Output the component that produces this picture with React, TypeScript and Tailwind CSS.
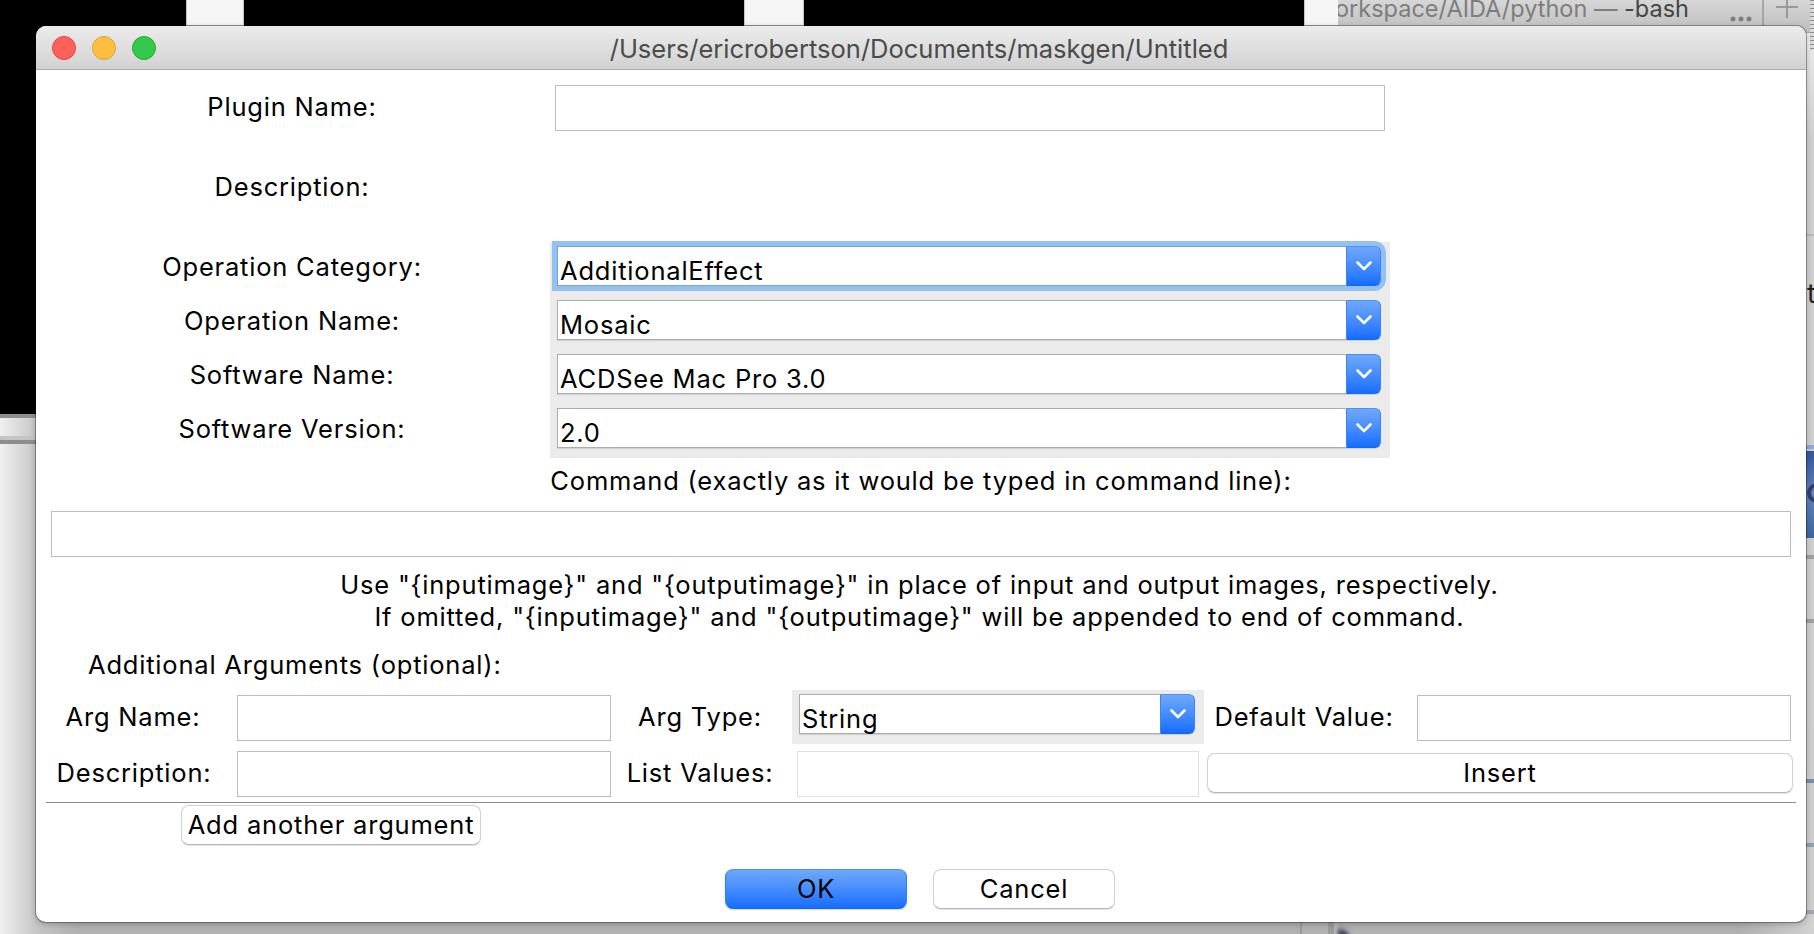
import React from "react";

const TEXT = "text-[25.5px] leading-[32px] whitespace-nowrap text-black tracking-[0.8px]";

function Label({ children, className = "" }: { children: React.ReactNode; className?: string }) {
  return <span className={`${TEXT} text-center ${className}`}>{children}</span>;
}

function Field({ className = "" }: { className?: string }) {
  return <input type="text" className={`box-border block h-[46px] border bg-white outline-none ${className}`} />;
}

function Combo({ value, focused = false, className = "" }: { value: string; focused?: boolean; className?: string }) {
  return (
    <div
      className={`flex h-10 rounded-r-[7px] ${focused ? "shadow-[0_0_0_5px_#94c1f0]" : "shadow-[0_1px_1px_rgba(0,0,0,0.12)]"} ${className}`}
    >
      <div
        className={`flex min-w-0 flex-1 items-start border border-r-0 bg-white pl-[2px] ${
          focused ? "border-[#74a5da]" : "border-[#acacac]"
        }`}
      >
        <span className={`${TEXT} pt-2`}>{value}</span>
      </div>
      <div className="flex w-[35px] items-center justify-center rounded-r-[6px] border border-t-[#4a92f8] border-r-[#3b86f8] border-b-[#1567ee] border-l-[#3b82f6] bg-linear-to-b from-[#6fa8fa] to-[#136dff]">
        <svg width="16" height="10" viewBox="0 0 16 10" fill="none">
          <path d="M1.5 1.5L8 8L14.5 1.5" stroke="white" strokeWidth="2.6" strokeLinecap="round" strokeLinejoin="round" />
        </svg>
      </div>
    </div>
  );
}

function PushButton({ children, primary = false, className = "" }: { children: React.ReactNode; primary?: boolean; className?: string }) {
  return (
    <button
      className={`${TEXT} box-border flex h-10 items-center justify-center rounded-[8px] border ${
        primary
          ? "border-t-[#4a92f8] border-r-[#2f7df5] border-b-[#1567ee] border-l-[#2f7df5] bg-linear-to-b from-[#6fa8fa] to-[#136dff] shadow-[0_1px_1px_rgba(0,0,0,0.15)]"
          : "border-[#d2d2d2] border-b-[#b9b9b9] bg-white shadow-[0_1px_1px_rgba(0,0,0,0.12)]"
      } ${className}`}
    >
      {children}
    </button>
  );
}

function Desktop() {
  return (
    <div className="absolute inset-0 overflow-hidden bg-[#b1b1b1]">
      <div className="absolute top-0 left-0 h-[414px] w-[1338px] bg-black" />
      <div className="absolute top-0 left-[186px] h-[26px] w-[58px] border border-t-0 border-[#c4c4c4] bg-[#f5f5f5]" />
      <div className="absolute top-0 left-[744px] h-[26px] w-[60px] border border-t-0 border-[#c4c4c4] bg-[#f5f5f5]" />
      <div className="absolute top-0 left-[1304px] h-[26px] w-[34px] border border-t-0 border-r-0 border-[#c4c4c4] bg-[#f5f5f5]" />

      <div className="absolute top-[904px] left-9 h-[30px] w-[40px] bg-linear-to-r from-[#c6c6c6] to-[#b1b1b1]" />
      <div className="absolute top-[414px] left-0 h-[520px] w-9 bg-linear-to-r from-[#f0f0f0] to-[#c6c6c6]" />
      <div className="absolute top-[414px] left-0 h-1 w-9 bg-[#8d8d8d]" />
      <div className="absolute top-[436px] left-0 h-1 w-9 bg-[#c4c4c4]" />
      <div className="absolute top-[440px] left-0 h-1 w-9 bg-[#8d8d8d]" />

      <div className="absolute top-0 left-[1338px] flex h-8 w-[472px] items-start overflow-hidden bg-linear-to-b from-[#d6d6d6] to-[#bebebe]">
        <div className="-mt-[7px] -ml-[3px] text-[23.5px] leading-[32px] whitespace-nowrap text-[#7d7d7d]">
          orkspace/AIDA/python — <span className="text-[#444]">-bash</span>
        </div>
        <svg width="80" height="32" viewBox="0 0 80 32" className="absolute top-0 right-0">
          <g fill="#808080">
            <circle cx="3" cy="19" r="2.5" />
            <circle cx="11" cy="19" r="2.5" />
            <circle cx="19" cy="19" r="2.5" />
          </g>
          <path d="M33 0V32" stroke="#989898" strokeWidth="1.5" />
          <path d="M46 7H68M57 0V18" stroke="#999" strokeWidth="2" />
        </svg>
      </div>
      <div className="absolute top-0 left-[1810px] h-[50px] w-1 bg-[repeating-linear-gradient(#8e8e8e_0_1px,#dadada_1px_4px)]" />
      <div className="absolute top-8 left-[1800px] h-[18px] w-2.5 border-t border-[#aaa] bg-[#ececec]" />
      <div className="absolute top-[50px] left-[1800px] h-[884px] w-[14px] bg-linear-to-b from-[#e8e8e8] via-[#cfcfcf] via-10% to-[#cecece]" />
      <div className="absolute top-[234px] left-[1800px] h-0.5 w-[14px] bg-[#b8b8b8]" />
      <div className="absolute top-[278px] left-[1807px] text-[27px] leading-[32px] text-[#222]">t</div>
      <div className="absolute top-[445px] left-[1800px] h-[4px] w-[14px] bg-[#8eaada]" />
      <div className="absolute top-[451px] left-[1800px] h-[87px] w-[14px] overflow-hidden bg-linear-to-b from-[#34579a] via-[#6483b8] to-[#3d659f]">
        <div className="mt-[32px] ml-[7px] size-[20px] rounded-full border-4 border-[#34406a]" />
      </div>
      <div className="absolute top-[555px] left-[1800px] h-[4px] w-[14px] bg-[#a0a0a0]" />
      <div className="absolute top-[619px] left-[1800px] h-[4px] w-[14px] bg-[#a0a0a0]" />
      <div className="absolute top-[779px] left-[1800px] h-[4px] w-[14px] bg-[#7590ac]" />
      <div className="absolute top-[843px] left-[1800px] h-[4px] w-[14px] bg-[#8ea2b2]" />
      <div className="absolute top-[910px] left-[1800px] h-[4px] w-[14px] bg-[#a4a8ac]" />

      <div className="absolute top-[904px] left-[1300px] h-[30px] w-0.5 bg-[#9a9a9a]" />
      <div className="absolute top-[904px] left-[1328px] h-[30px] w-[6px] bg-[#9b9b9b]" />
      <div className="absolute top-[904px] left-[1334px] h-[30px] w-[4px] bg-[#b9b9b9]" />
      <div className="absolute top-[929px] left-[1338px] h-[10px] w-[12px] rounded-tr-full bg-[#3c4352] blur-[2px]" />
      <div className="absolute top-[918px] left-[1740px] h-[16px] w-[74px] bg-linear-to-r from-[#b1b1b1] to-[#d2d2d2]" />
    </div>
  );
}

const operationRows = [
  { label: "Operation Category:", value: "AdditionalEffect", focused: true },
  { label: "Operation Name:", value: "Mosaic" },
  { label: "Software Name:", value: "ACDSee Mac Pro 3.0" },
  { label: "Software Version:", value: "2.0" },
];

export default function App() {
  return (
    <div className="relative h-[934px] w-[1814px] overflow-hidden pt-[26px] pl-9 font-['Inter','Liberation_Sans',sans-serif]">
      <Desktop />
      <main className="relative flex h-[896px] w-[1770px] flex-col overflow-hidden rounded-[10px] bg-white shadow-[0_0_0_1px_rgba(0,0,0,0.3),0_2px_6px_rgba(0,0,0,0.25)]">
        <header className="relative flex h-11 shrink-0 items-center justify-center border-b border-[#adadad] bg-linear-to-b from-[#ececec] to-[#d1d1d1]">
          <div className="absolute left-4 flex gap-4">
            <i className="size-6 rounded-full border border-[#e2463f] bg-[#ff605b]" />
            <i className="size-6 rounded-full border border-[#dfa033] bg-[#ffbf41]" />
            <i className="size-6 rounded-full border border-[#1fab30] bg-[#34c94a]" />
          </div>
          <h1 className="pt-0.5 pr-1 text-[25.5px] leading-[32px] whitespace-nowrap text-[#4b4b4b]">
            /Users/ericrobertson/Documents/maskgen/Untitled
          </h1>
        </header>

        <div className="mt-[15px] flex h-[46px] items-center">
          <Label className="w-[512px] pb-[2px]">Plugin Name:</Label>
          <Field className="ml-[7px] w-[830px] border-[#bdbdbd]" />
        </div>
        <div className="mt-[40px] flex h-[32px]">
          <Label className="w-[512px]">Description:</Label>
        </div>

        <div className="mt-[39px] flex h-[216px]">
          <div className="flex w-[512px] flex-col">
            {operationRows.map((row) => (
              <div key={row.label} className="flex h-[54px] flex-col pt-[9px]">
                <Label>{row.label}</Label>
              </div>
            ))}
          </div>
          <div className="ml-0.5 w-[840px] bg-[#ebebeb]">
            {operationRows.map((row) => (
              <div key={row.label} className="h-[54px] pt-1 pl-[7px]">
                <Combo value={row.value} focused={row.focused} className="w-[824px]" />
              </div>
            ))}
          </div>
        </div>

        <div className="mt-[7px] flex h-8 justify-center">
          <Label>Command (exactly as it would be typed in command line):</Label>
        </div>
        <Field className="mt-[14px] ml-[15px] w-[1740px] shrink-0 border-[#bdbdbd]" />
        <div className="mt-[12px] flex flex-col items-center pr-[3px]">
          <Label>Use "&#123;inputimage&#125;" and "&#123;outputimage&#125;" in place of input and output images, respectively.</Label>
          <Label>If omitted, "&#123;inputimage&#125;" and "&#123;outputimage&#125;" will be appended to end of command.</Label>
        </div>
        <div className="mt-4 flex h-8 pl-[52px]">
          <Label>Additional Arguments (optional):</Label>
        </div>

        <div className="mt-[9px] flex h-[54px] items-start">
          <Label className="mt-[11px] w-[194px]">Arg Name:</Label>
          <Field className="mt-[5px] ml-[7px] w-[374px] border-[#bdbdbd]" />
          <Label className="mt-[11px] w-[178px]">Arg Type:</Label>
          <div className="ml-[3px] h-[54px] w-[412px] bg-[#ebebeb] pt-1 pl-[7px]">
            <Combo value="String" className="w-[396px]" />
          </div>
          <Label className="mt-[11px] w-[200px]">Default Value:</Label>
          <Field className="mt-[5px] ml-[13px] w-[374px] border-[#bdbdbd]" />
        </div>
        <div className="mt-[7px] flex h-[46px] items-start">
          <Label className="mt-[6px] w-[194px] pl-[2px]">Description:</Label>
          <Field className="ml-[7px] w-[374px] border-[#bdbdbd]" />
          <Label className="mt-[6px] w-[178px]">List Values:</Label>
          <Field className="ml-[8px] w-[402px] border-[#dfdfdf]" />
          <PushButton className="mt-[2px] ml-[8px] w-[586px]">Insert</PushButton>
        </div>

        <div className="mt-[5px] ml-[10px] h-px w-[1750px] shrink-0 bg-[#8b8b8b]" />
        <div className="mt-[2px] pl-[145px]">
          <PushButton className="w-[300px]">Add another argument</PushButton>
        </div>
        <footer className="mt-6 flex gap-[26px] pl-[689px]">
          <PushButton primary className="w-[182px]">OK</PushButton>
          <PushButton className="w-[182px]">Cancel</PushButton>
        </footer>
      </main>
    </div>
  );
}
